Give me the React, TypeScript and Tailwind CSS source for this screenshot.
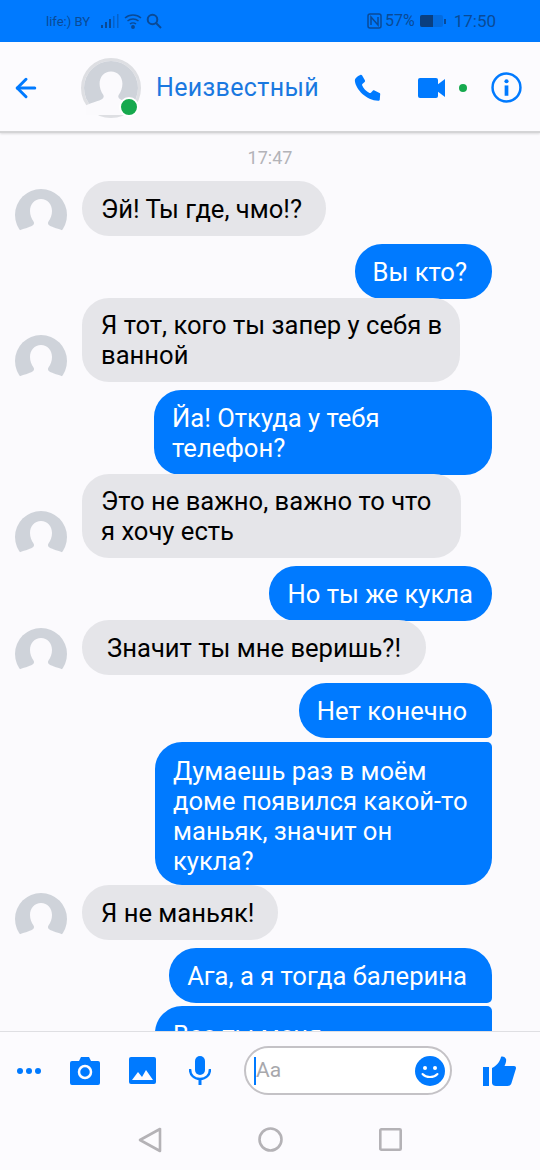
import React from "react";
import { ArrowLeft } from "lucide-react";

const blue = "#007aff";

const Avatar = ({ size }: { size: number }) => {
  return (
    <svg width={size} height={size} viewBox="0 0 52 52" className="shrink-0">
      <circle cx="26" cy="26" r="26" fill="#cfd3da" />
      <path
        d="M26 10c-6.500 0-11 5-11 12 0 4 1.500 8 3.500 10.500 1 1.500.5 3-1 4-3 2-9 3-15.500 6V52h48v-9.500c-6.500-3-12.500-4-15.500-6-1.500-1-2-2.500-1-4 2-2.500 3.500-6.500 3.500-10.500 0-7-4.500-12-11-12z"
        fill="#fbfafd"
      />
    </svg>
  );
};

const Left = ({ text, className }: { text: React.ReactNode; className: string }) => {
  return (
    <div className="flex items-end">
      <div className="ml-[15px] -mb-[5px] mr-[15px]">
        <Avatar size={52} />
      </div>
      <div className={"rounded-[27px] bg-[#e5e5e9] text-black py-[12.500px] " + className}>{text}</div>
    </div>
  );
};

const Right = ({ text, className }: { text: React.ReactNode; className: string }) => {
  return (
    <div className="flex justify-end pr-[48px]">
      <div className={"bg-[#007aff] text-white " + className}>{text}</div>
    </div>
  );
};

export default function App() {
  return (
    <div
      className="w-[540px] h-[1170px] overflow-hidden flex flex-col bg-[#fbfafd] text-[25.600px] leading-[30px]"
      style={{ fontFamily: "Roboto, sans-serif" }}
    >
      {/* status bar */}
      <div className="h-[42px] shrink-0 bg-[#007aff] flex items-center justify-between pl-[46px] pr-[44px] text-[#0a4a96]">
        <div className="flex items-center">
          <span className="text-[13px] leading-none mr-[11px]">life:) BY</span>
          <svg width="18" height="14" viewBox="0 0 18 14" fill="#0a4a96" className="mr-[5px]">
            <rect x="0" y="11" width="2" height="3" />
            <rect x="4" y="8" width="2" height="6" />
            <rect x="8" y="5" width="2" height="9" />
            <rect x="12" y="2" width="1.500" height="12" opacity=".5" />
            <rect x="16" y="0" width="1.500" height="14" opacity=".5" />
          </svg>
          <svg width="18" height="16" viewBox="0 0 18 16" fill="none" stroke="#0a4a96" strokeWidth="1.500" className="mr-[4px]">
            <path d="M1 5c4.500-4 11.500-4 16 0M3.500 8c3-2.600 8-2.600 11 0M6 11c1.600-1.300 4.400-1.300 6 0" />
            <circle cx="9" cy="14" r="1.200" fill="#0a4a96" />
          </svg>
          <svg width="16" height="16" viewBox="0 0 16 16" fill="none" stroke="#0a4a96" strokeWidth="2">
            <circle cx="6.500" cy="6.500" r="4.800" />
            <path d="M10 10l5 5" />
          </svg>
        </div>
        <div className="flex items-center">
          <svg width="15" height="16" viewBox="0 0 15 16" fill="none" stroke="#0a4a96" strokeWidth="1.500" className="mr-[3px]">
            <rect x="1" y="1" width="13" height="14" rx="2" />
            <path d="M4 12V4l7 8V4" />
          </svg>
          <span className="text-[16px] leading-none mr-[5px]">57%</span>
          <div className="flex items-center mr-[8px]">
            <div className="w-[23px] h-[12px] rounded-[2px] bg-[#0a4a96]/30 overflow-hidden">
              <div className="w-[13px] h-full bg-[#0a3f80]" />
            </div>
            <div className="w-[2px] h-[5px] ml-[1px] bg-[#0a4a96]" />
          </div>
          <span className="text-[17px] leading-none">17:50</span>
        </div>
      </div>

      {/* header */}
      <div className="h-[91px] shrink-0 flex items-center pt-[2px] bg-[#fcfbfe] border-b-2 border-[#d4d4d6] relative z-10 shadow-[0_1px_2px_rgba(0,0,0,0.12)]">
        <ArrowLeft size={30} color={blue} strokeWidth={2.400} className="ml-[11px] mr-[40px] shrink-0" />
        <div className="relative w-[60px] h-[60px] mr-[15px] shrink-0 rounded-full border-[3px] border-[#dedfe3]">
          <Avatar size={54} />
          <div className="absolute right-[-1px] bottom-[-2px] w-[20px] h-[20px] rounded-full bg-[#16a94e] border-[2px] border-white" />
        </div>
        <span className="text-[#1a78e0] text-[25px] leading-none tracking-[0.35px] w-[196px] shrink-0">Неизвестный</span>
        <svg width="30" height="30" viewBox="0 0 24 24" fill={blue} className="shrink-0 mr-[36px]">
          <path d="M6.600 1.500c.5-.3 1.100-.2 1.400.3l2.300 4c.3.500.2 1-.2 1.400L8.300 8.700c-.3.300-.4.700-.2 1.100.9 2.300 3.300 5 5.900 6.100.4.200.8.100 1.100-.2l1.500-1.600c.4-.4 1-.4 1.400-.2l4 2.100c.6.300.7.900.5 1.500l-.3 3.800c-.1.600-.6.900-1.200.9C11.500 22 3 13 2.300 6.400 2.200 4 4.300 2.500 6.600 1.500z" />
        </svg>
        <svg width="28" height="20" viewBox="0 0 28 20" fill={blue} className="shrink-0 mr-[13px]">
          <rect x="0" y="0" width="20" height="20" rx="2" />
          <path d="M19 7l8-6v18l-8-6z" />
        </svg>
        <div className="w-[8px] h-[8px] rounded-full bg-[#16a94e] shrink-0 mr-[24px]" />
        <svg width="31" height="31" viewBox="0 0 30 30" className="shrink-0">
          <circle cx="15" cy="15" r="13.500" fill="none" stroke={blue} strokeWidth="2.400" />
          <circle cx="15" cy="9" r="2" fill={blue} />
          <rect x="13.200" y="13" width="3.600" height="10" fill={blue} />
        </svg>
      </div>

      {/* messages */}
      <div className="flex-1 min-h-0 overflow-hidden flex flex-col">
        <div className="text-center text-[#b3b3b8] text-[18px] leading-[20px] mt-[15px] mb-[13px]">17:47</div>
        <Left text="Эй! Ты где, чмо!?" className="pl-[19px] pr-[24px]" />
        <div className="mt-[8px]">
          <Right text="Вы кто?" className="rounded-[27px] py-[12.500px] pl-[18px] pr-[25px]" />
        </div>
        <div className="-mt-px">
          <Left text={<>Я тот, кого ты запер у себя в<br />ванной</>} className="pl-[19px] pr-[18px] !py-[12px]" />
        </div>
        <div className="mt-[8px]">
          <Right text={<>Йа! Откуда у тебя<br />телефон?</>} className="rounded-[27px] w-[338px] py-[12.500px] px-[18px]" />
        </div>
        <div className="-mt-px">
          <Left text={<>Это не важно, важно то что<br />я хочу есть</>} className="pl-[19px] pr-[30px] !py-[12px]" />
        </div>
        <div className="mt-[8px]">
          <Right text="Но ты же кукла" className="rounded-[27px] py-[12.500px] pl-[18px] pr-[19px]" />
        </div>
        <div className="-mt-px">
          <Left text="Значит ты мне веришь?!" className="px-[25px]" />
        </div>
        <div className="mt-[8px]">
          <Right text="Нет конечно" className="rounded-l-[27px] rounded-tr-[27px] rounded-br-[5px] py-[12.500px] pl-[18px] pr-[25px]" />
        </div>
        <div className="mt-[4px]">
          <Right
            text={<>Думаешь раз в моём<br />доме появился какой-то<br />маньяк, значит он<br />кукла?</>}
            className="rounded-l-[27px] rounded-tr-[5px] rounded-br-[27px] w-[337px] h-[143px] pt-[14px] pl-[18px]"
          />
        </div>
        <Left text="Я не маньяк!" className="pl-[19px] pr-[24px]" />
        <div className="mt-[8px]">
          <Right text="Ага, а я тогда балерина" className="rounded-l-[27px] rounded-tr-[27px] rounded-br-[5px] py-[12.500px] pl-[18px] pr-[25px]" />
        </div>
        <div className="mt-[3px]">
          <Right text="Все ты меня" className="rounded-l-[27px] rounded-tr-[5px] rounded-br-[27px] w-[337px] h-[85px] pt-[14px] pl-[18px]" />
        </div>
      </div>

      {/* composer */}
      <div className="h-[78px] shrink-0 flex items-center bg-[#fcfbfe] border-t border-[#dfdfe3] relative">
        <svg width="26" height="8" viewBox="0 0 26 8" fill={blue} className="ml-[16px] mr-[28px] shrink-0">
          <circle cx="4" cy="4" r="3" />
          <circle cx="13" cy="4" r="3" />
          <circle cx="22" cy="4" r="3" />
        </svg>
        <svg width="30" height="28" viewBox="0 0 30 28" className="mr-[29px] shrink-0">
          <path d="M2 4h7l2-4h8l2 4h7a2 2 0 0 1 2 2v20a2 2 0 0 1-2 2H2a2 2 0 0 1-2-2V6a2 2 0 0 1 2-2z" fill={blue} />
          <circle cx="15" cy="15" r="6" fill="none" stroke="#fcfbfe" strokeWidth="2.500" />
        </svg>
        <svg width="27" height="27" viewBox="0 0 27 27" className="mr-[33px] shrink-0">
          <rect width="27" height="27" rx="2" fill={blue} />
          <path d="M3 23l6-8 4 5 4-7 7 10z" fill="#fcfbfe" />
        </svg>
        <svg width="22" height="29" viewBox="0 0 22 29" className="mr-[33px] shrink-0">
          <rect x="6" y="0" width="10" height="19" rx="5" fill={blue} />
          <path d="M1 13c0 6 4 10 10 10s10-4 10-10" fill="none" stroke={blue} strokeWidth="2.400" />
          <rect x="9.500" y="22" width="3" height="7" fill={blue} />
        </svg>
        <div className="w-[208px] h-[49px] rounded-full border-2 border-[#c4c2c6] bg-white flex items-center justify-between pl-[8px] pr-[5px] shrink-0 mr-[31px]">
          <div className="flex items-center">
            <div className="w-[2px] h-[28px] bg-[#007aff]" />
            <span className="text-[#a8a8ac] text-[21px] leading-none">Aa</span>
          </div>
          <svg width="30" height="30" viewBox="0 0 30 30">
            <circle cx="15" cy="15" r="15" fill={blue} />
            <circle cx="10" cy="12" r="2" fill="#fff" />
            <circle cx="20" cy="12" r="2" fill="#fff" />
            <path d="M7.500 18c3.500 4 11.500 4 15 0" fill="none" stroke="#fff" strokeWidth="2" strokeLinecap="round" />
          </svg>
        </div>
        <svg width="33" height="30" viewBox="0 0 33 30" fill={blue} className="shrink-0">
          <rect x="0" y="11" width="6" height="19" />
          <path d="M9 12c4-2 8-6 9-11 0-1 4-1 5 2 .6 2-.5 5-1.500 7H31c2 0 2.500 2 1.500 4l-4 13c-.5 2-2 3-4 3H13c-2 0-4-1-4-3z" />
        </svg>
      </div>

      {/* nav bar */}
      <div className="h-[61px] shrink-0 flex items-center justify-center bg-[#fcfbfe] gap-[96px]">
        <svg width="24" height="26" viewBox="0 0 24 26" fill="none" stroke="#b4b2b6" strokeWidth="2.600" strokeLinejoin="round">
          <path d="M22 2v22L2 13z" />
        </svg>
        <svg width="25" height="25" viewBox="0 0 25 25" fill="none" stroke="#b4b2b6" strokeWidth="2.600">
          <circle cx="12.500" cy="12.500" r="11" />
        </svg>
        <svg width="23" height="23" viewBox="0 0 23 23" fill="none" stroke="#b4b2b6" strokeWidth="2.600">
          <rect x="1.300" y="1.300" width="20.400" height="20.400" rx="1" />
        </svg>
      </div>
    </div>
  );
}
